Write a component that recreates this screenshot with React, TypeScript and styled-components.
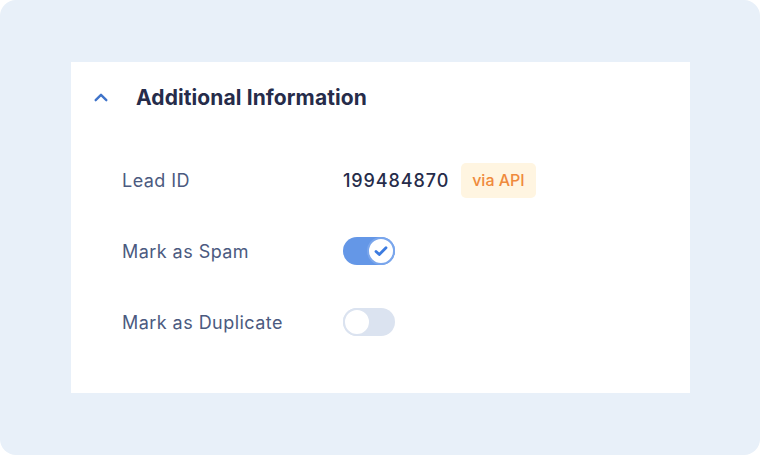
import { useState } from 'react';
import styled, { createGlobalStyle } from 'styled-components';

const GlobalStyle = createGlobalStyle`
  html, body {
    margin: 0;
    padding: 0;
    background: #ffffff;
  }
  body {
    font-family: Inter, "Noto Sans", sans-serif;
  }
`;

const Frame = styled.div`
  width: 760px;
  height: 455px;
  box-sizing: border-box;
  background: #e8f0f9;
  border-radius: 16px;
  padding: 62px 70px 62px 71px;
`;

const Card = styled.section`
  background: #ffffff;
  height: 331px;
  box-sizing: border-box;
  padding: 17px 22px 0 22px;
`;

const Header = styled.div`
  display: flex;
  align-items: center;
  height: 36px;
  gap: 27px;
`;

const Chevron = styled.button`
  width: 16px;
  height: 16px;
  padding: 0;
  border: none;
  background: none;
  display: flex;
  align-items: center;
  justify-content: center;
  cursor: pointer;
`;

const Title = styled.h2`
  margin: 0;
  font-size: 21px;
  font-weight: 700;
  color: #262c4a;
  letter-spacing: 0.1px;
`;

const Rows = styled.div`
  display: grid;
  grid-template-columns: 221px 1fr;
  grid-auto-rows: 36px;
  row-gap: 35px;
  margin-top: 47px;
  padding-left: 29px;
  align-items: center;
`;

const Label = styled.div`
  font-size: 18px;
  color: #4b5a80;
  letter-spacing: 0.45px;
`;

const Value = styled.div`
  display: flex;
  align-items: center;
  gap: 12px;
`;

const LeadId = styled.span`
  font-size: 18px;
  font-weight: 500;
  color: #262c4a;
  letter-spacing: 0.9px;
`;

const Badge = styled.span`
  display: inline-flex;
  align-items: center;
  height: 35px;
  padding: 0 11px;
  border-radius: 5px;
  background: #fff5e1;
  color: #ef8a3c;
  font-size: 16px;
  font-weight: 500;
`;

const Track = styled.button<{ $on: boolean }>`
  position: relative;
  width: 52px;
  height: 28px;
  padding: 0;
  border: none;
  border-radius: 14px;
  background: ${(p) => (p.$on ? '#6497e7' : '#dbe3f0')};
  cursor: pointer;
`;

const Knob = styled.span<{ $on: boolean }>`
  position: absolute;
  top: 0;
  left: ${(p) => (p.$on ? '24px' : '0')};
  width: 28px;
  height: 28px;
  box-sizing: border-box;
  border-radius: 50%;
  border: 2px solid ${(p) => (p.$on ? '#7aa6ec' : '#dbe3f0')};
  background: #ffffff;
  display: flex;
  align-items: center;
  justify-content: center;
`;

function Toggle({ on, onChange }: { on: boolean; onChange: () => void }) {
  return (
    <Track $on={on} onClick={onChange} aria-pressed={on}>
      <Knob $on={on}>
        {on && (
          <svg width="16" height="16" viewBox="0 0 16 16">
            <path d="M3 8.4l3.3 3.2L13 4.8" fill="none" stroke="#3c7be0" strokeWidth="2.8" strokeLinecap="round" strokeLinejoin="round" />
          </svg>
        )}
      </Knob>
    </Track>
  );
}

export default function App() {
  const [spam, setSpam] = useState(true);
  const [duplicate, setDuplicate] = useState(false);

  return (
    <>
      <GlobalStyle />
      <Frame>
        <Card>
          <Header>
            <Chevron aria-label="Collapse">
              <svg width="18" height="11" viewBox="0 0 18 11">
                <path d="M3 8.5l6-6 6 6" fill="none" stroke="#3f73c9" strokeWidth="2.6" strokeLinecap="round" strokeLinejoin="round" />
              </svg>
            </Chevron>
            <Title>Additional Information</Title>
          </Header>
          <Rows>
            <Label>Lead ID</Label>
            <Value>
              <LeadId>199484870</LeadId>
              <Badge>via API</Badge>
            </Value>
            <Label>Mark as Spam</Label>
            <Value>
              <Toggle on={spam} onChange={() => setSpam(!spam)} />
            </Value>
            <Label>Mark as Duplicate</Label>
            <Value>
              <Toggle on={duplicate} onChange={() => setDuplicate(!duplicate)} />
            </Value>
          </Rows>
        </Card>
      </Frame>
    </>
  );
}
